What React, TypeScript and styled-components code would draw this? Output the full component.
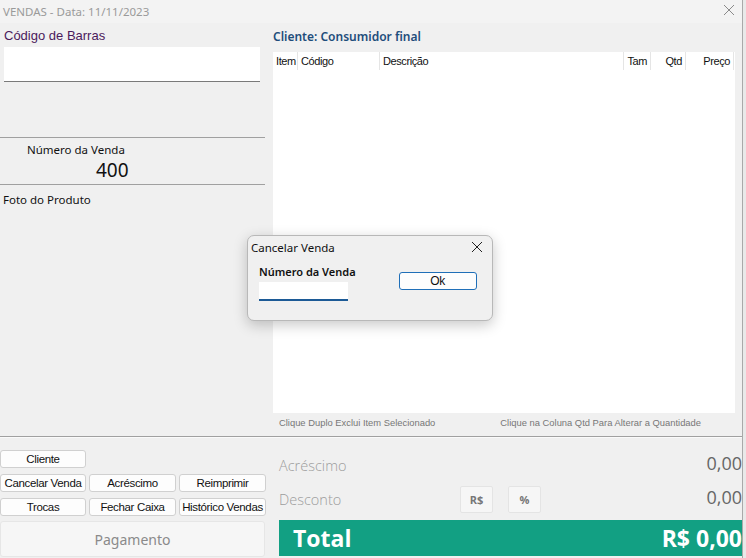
import { FC } from "react";
import styled, { createGlobalStyle } from "styled-components";

const GlobalStyle = createGlobalStyle`
  html, body {
    margin: 0;
    padding: 0;
    background: #e9e9e9;
  }
  #root {
    width: 746px;
    height: 558px;
    overflow: hidden;
  }
`;

const columns = [
  { name: "Item", width: 25, align: "left" },
  { name: "Código", width: 82, align: "left" },
  { name: "Descrição", width: 244, align: "left" },
  { name: "Tam", width: 27, align: "right" },
  { name: "Qtd", width: 35, align: "right" },
  { name: "Preço", width: 48, align: "right" },
];

const CloseIcon: FC<{ size: number; color: string }> = ({ size, color }) => (
  <svg width={size} height={size} viewBox="0 0 12 12">
    <path d="M1 1 L11 11 M11 1 L1 11" stroke={color} strokeWidth="1" fill="none" />
  </svg>
);

const App: FC = () => {
  return (
    <>
      <GlobalStyle />
      <Window>
        <TitleBar>
          <TitleText>VENDAS - Data: 11/11/2023</TitleText>
          <CloseButton>
            <CloseIcon size={12} color="#8a8a8a" />
          </CloseButton>
        </TitleBar>

        <TopSection>
          <LeftPanel>
            <FieldLabel>Código de Barras</FieldLabel>
            <BarcodeInput />
            <SaleBox>
              <SaleLabel>Número da Venda</SaleLabel>
              <SaleNumber>400</SaleNumber>
            </SaleBox>
            <PhotoLabel>Foto do Produto</PhotoLabel>
          </LeftPanel>

          <RightPanel>
            <ClientLabel>Cliente: Consumidor final</ClientLabel>
            <Grid>
              <GridHeader>
                {columns.map((c) => (
                  <HeaderCell key={c.name} $width={c.width} $align={c.align}>
                    {c.name}
                  </HeaderCell>
                ))}
              </GridHeader>
            </Grid>
            <HintRow>
              <Hint>Clique Duplo Exclui Item Selecionado</Hint>
              <Hint>Clique na Coluna Qtd Para Alterar a Quantidade</Hint>
            </HintRow>
          </RightPanel>
        </TopSection>

        <Divider />

        <BottomSection>
          <ButtonPanel>
            <ButtonGrid>
              <ActionButton>Cliente</ActionButton>
              <Spacer />
              <Spacer />
              <ActionButton>Cancelar Venda</ActionButton>
              <ActionButton>Acréscimo</ActionButton>
              <ActionButton>Reimprimir</ActionButton>
              <ActionButton>Trocas</ActionButton>
              <ActionButton>Fechar Caixa</ActionButton>
              <ActionButton>Histórico Vendas</ActionButton>
            </ButtonGrid>
            <PayButton>Pagamento</PayButton>
          </ButtonPanel>

          <TotalsPanel>
            <TotalsRow>
              <TotalsLabel>Acréscimo</TotalsLabel>
              <TotalsValue>0,00</TotalsValue>
            </TotalsRow>
            <TotalsRow>
              <TotalsLabel>Desconto</TotalsLabel>
              <ModeButtons>
                <ModeButton>R$</ModeButton>
                <ModeButton>%</ModeButton>
              </ModeButtons>
              <TotalsValue>0,00</TotalsValue>
            </TotalsRow>
            <TotalBar>
              <TotalText>Total</TotalText>
              <TotalText>R$ 0,00</TotalText>
            </TotalBar>
          </TotalsPanel>
        </BottomSection>

        <Dialog>
          <DialogTitleBar>
            <DialogTitle>Cancelar Venda</DialogTitle>
            <CloseIcon size={12} color="#222" />
          </DialogTitleBar>
          <DialogBody>
            <DialogField>
              <DialogLabel>Número da Venda</DialogLabel>
              <DialogInput />
            </DialogField>
            <OkButton>Ok</OkButton>
          </DialogBody>
        </Dialog>
      </Window>
    </>
  );
};

export default App;

const Window = styled.div`
  position: relative;
  width: 742px;
  height: 558px;
  background: #f0f0f0;
  border-right: 1px solid #a9a9a9;
  display: flex;
  flex-direction: column;
  font-family: "Liberation Sans", Arial, sans-serif;
`;

const TitleBar = styled.div`
  height: 23px;
  display: flex;
  align-items: center;
  justify-content: space-between;
  background: #f3f3f3;
  padding: 0 7px 0 3px;
`;

const TitleText = styled.span`
  font-family: "Noto Sans", sans-serif;
  font-size: 11.5px;
  color: #9a9a9a;
`;

const CloseButton = styled.span`
  display: flex;
  margin-top: -3px;
`;

const TopSection = styled.div`
  display: flex;
  height: 413px;
`;

const LeftPanel = styled.div`
  width: 265px;
  display: flex;
  flex-direction: column;
`;

const FieldLabel = styled.div`
  font-size: 13px;
  color: #4b1a5c;
  padding: 5px 0 0 4px;
  height: 19px;
`;

const BarcodeInput = styled.div`
  margin-left: 4px;
  width: 256px;
  height: 34px;
  background: #fff;
  border-bottom: 1px solid #7a7a7a;
`;

const SaleBox = styled.div`
  margin-top: 55px;
  border-top: 1px solid #a0a0a0;
  border-bottom: 1px solid #a0a0a0;
  height: 46px;
  display: flex;
  flex-direction: column;
  padding-left: 27px;
`;

const SaleLabel = styled.div`
  font-family: "Noto Sans", sans-serif;
  font-size: 11.5px;
  color: #111;
  margin-top: 4px;
`;

const SaleNumber = styled.div`
  font-family: "Noto Sans", sans-serif;
  font-size: 19px;
  color: #111;
  margin: 2px 0 0 69px;
  line-height: 22px;
`;

const PhotoLabel = styled.div`
  font-family: "Noto Sans", sans-serif;
  font-size: 11.5px;
  color: #111;
  padding: 7px 0 0 3px;
`;

const RightPanel = styled.div`
  flex: 1;
  padding-left: 8px;
  display: flex;
  flex-direction: column;
`;

const ClientLabel = styled.div`
  font-family: "Noto Sans", sans-serif;
  font-weight: 600;
  font-size: 12px;
  color: #1e4d7b;
  height: 29px;
  padding-top: 5px;
  box-sizing: border-box;
`;

const Grid = styled.div`
  width: 462px;
  height: 361px;
  background: #fff;
`;

const GridHeader = styled.div`
  display: flex;
  height: 18px;
  align-items: stretch;
`;

const HeaderCell = styled.div<{ $width: number; $align: string }>`
  width: ${(p) => p.$width}px;
  box-sizing: border-box;
  border-right: 1px solid #e5e5e5;
  font-size: 11px;
  letter-spacing: -0.4px;
  color: #111;
  text-align: ${(p) => p.$align};
  padding: 3px 3px 0 3px;
`;

const HintRow = styled.div`
  display: flex;
  gap: 65px;
  height: 18px;
  align-items: center;
  padding-left: 6px;
`;

const Hint = styled.span`
  font-size: 9.4px;
  color: #777;
`;

const Divider = styled.div`
  height: 0;
  border-top: 1px solid #a0a0a0;
  border-bottom: 1px solid #fafafa;
`;

const BottomSection = styled.div`
  display: flex;
  flex: 1;
`;

const ButtonPanel = styled.div`
  width: 265px;
  display: flex;
  flex-direction: column;
  padding-top: 12px;
`;

const ButtonGrid = styled.div`
  display: grid;
  grid-template-columns: 86px 87px 87px;
  column-gap: 3px;
  row-gap: 6px;
`;

const Spacer = styled.div``;

const ActionButton = styled.div`
  height: 18px;
  box-sizing: border-box;
  background: #fdfdfd;
  border: 1px solid #d0d0d0;
  border-radius: 3px;
  display: flex;
  align-items: center;
  justify-content: center;
  font-size: 11.5px;
  letter-spacing: -0.35px;
  color: #111;
  white-space: nowrap;
`;

const PayButton = styled.div`
  margin-top: 5px;
  height: 34px;
  background: #f6f6f6;
  border: 1px solid #e6e6e6;
  border-radius: 3px;
  display: flex;
  align-items: center;
  justify-content: center;
  font-family: "Noto Sans", sans-serif;
  font-size: 14px;
  color: #8a8a8a;
`;

const TotalsPanel = styled.div`
  flex: 1;
  padding: 12px 0 0 14px;
  display: flex;
  flex-direction: column;
`;

const TotalsRow = styled.div`
  display: flex;
  align-items: center;
  height: 30px;
  margin-bottom: 4px;
`;

const TotalsLabel = styled.span`
  font-family: "Open Sans", sans-serif;
  font-weight: 300;
  font-size: 14.5px;
  color: #9c9c9c;
  width: 181px;
`;

const TotalsValue = styled.span`
  margin-left: auto;
  font-family: "Open Sans", sans-serif;
  font-size: 18px;
  color: #666;
  margin-top: -5px;
`;

const ModeButtons = styled.div`
  display: flex;
  gap: 15px;
`;

const ModeButton = styled.div`
  width: 33px;
  height: 27px;
  box-sizing: border-box;
  background: #f6f6f6;
  border: 1px solid #e4e4e4;
  border-radius: 2px;
  display: flex;
  align-items: center;
  justify-content: center;
  font-family: "Open Sans", sans-serif;
  font-weight: 700;
  font-size: 11px;
  color: #777;
`;

const TotalBar = styled.div`
  margin-top: 2px;
  height: 36px;
  background: #12a083;
  display: flex;
  align-items: center;
  justify-content: space-between;
  padding: 0 0 0 14px;
`;

const TotalText = styled.span`
  font-family: "Open Sans", sans-serif;
  font-weight: 700;
  font-size: 23px;
  color: #fff;
`;

const Dialog = styled.div`
  position: absolute;
  left: 247px;
  top: 235px;
  width: 246px;
  height: 86px;
  box-sizing: border-box;
  background: #f0f0f0;
  border: 1px solid #b8b8b8;
  border-radius: 7px;
  box-shadow: 0 4px 14px rgba(0, 0, 0, 0.22);
  display: flex;
  flex-direction: column;
`;

const DialogTitleBar = styled.div`
  height: 22px;
  display: flex;
  align-items: center;
  justify-content: space-between;
  padding: 0 9px 0 3px;
`;

const DialogTitle = styled.span`
  font-family: "Noto Sans", sans-serif;
  font-size: 11.5px;
  color: #111;
`;

const DialogBody = styled.div`
  display: flex;
  padding: 6px 0 0 11px;
`;

const DialogField = styled.div`
  display: flex;
  flex-direction: column;
`;

const DialogLabel = styled.div`
  font-family: "Noto Sans", sans-serif;
  font-weight: 600;
  font-size: 11px;
  color: #111;
`;

const DialogInput = styled.div`
  margin-top: 3px;
  width: 89px;
  height: 19px;
  box-sizing: border-box;
  background: #fff;
  border-bottom: 2px solid #1c5a96;
`;

const OkButton = styled.div`
  margin: 8px 0 0 43px;
  width: 78px;
  height: 18px;
  box-sizing: border-box;
  background: #fdfdfd;
  border: 1px solid #1f6fb8;
  border-radius: 3px;
  display: flex;
  align-items: center;
  justify-content: center;
  font-size: 12px;
  letter-spacing: -0.3px;
  color: #111;
`;
